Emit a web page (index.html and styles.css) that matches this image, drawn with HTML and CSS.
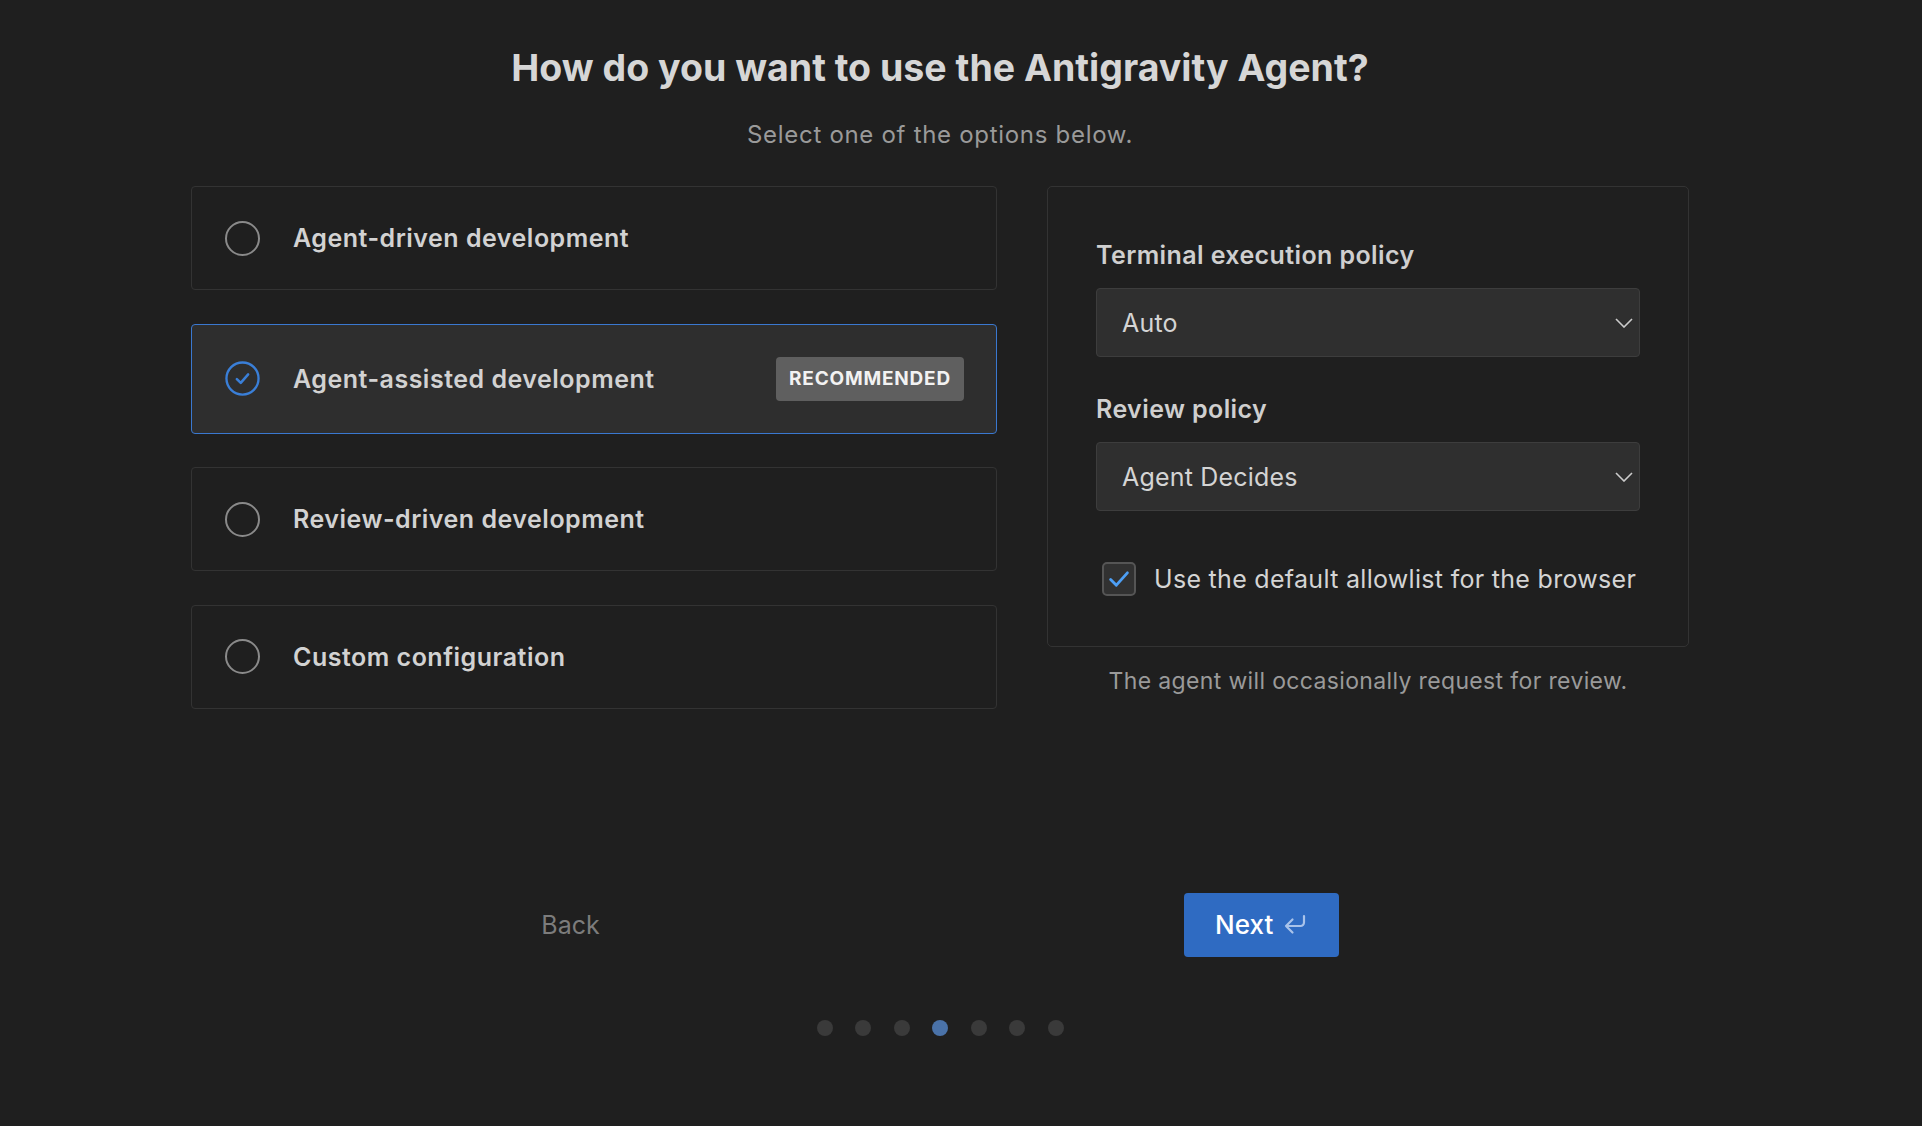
FILE: index.html
```html
<!DOCTYPE html>
<html lang="en">
<head>
<meta charset="utf-8">
<title>Antigravity Agent</title>
<link rel="stylesheet" href="styles.css">
</head>
<body>
<main class="page">
  <h1 class="title">How do you want to use the Antigravity Agent?</h1>
  <p class="subtitle">Select one of the options below.</p>
  <div class="content">
    <div class="options">
      <div class="option">
        <span class="radio"></span>
        <span class="option-label">Agent-driven development</span>
      </div>
      <div class="option selected">
        <svg class="radio-check" viewBox="0 0 36 36" width="36" height="36">
          <circle cx="18" cy="18" r="16.5" fill="none" stroke="#3a7fd8" stroke-width="2.4"/>
          <path d="M12.2 18.6 L16.2 22.5 L23.8 13.8" fill="none" stroke="#3a7fd8" stroke-width="2.6" stroke-linecap="round" stroke-linejoin="round"/>
        </svg>
        <span class="option-label">Agent-assisted development</span>
        <span class="badge">RECOMMENDED</span>
      </div>
      <div class="option">
        <span class="radio"></span>
        <span class="option-label">Review-driven development</span>
      </div>
      <div class="option">
        <span class="radio"></span>
        <span class="option-label">Custom configuration</span>
      </div>
    </div>
    <div class="side">
      <div class="panel">
        <div class="field-label">Terminal execution policy</div>
        <div class="select">
          <span>Auto</span>
          <svg class="chevron" viewBox="0 0 18 10" width="18" height="10"><path d="M1 1 L9 9 L17 1" fill="none" stroke="#cccccc" stroke-width="1.6"/></svg>
        </div>
        <div class="field-label second">Review policy</div>
        <div class="select">
          <span>Agent Decides</span>
          <svg class="chevron" viewBox="0 0 18 10" width="18" height="10"><path d="M1 1 L9 9 L17 1" fill="none" stroke="#cccccc" stroke-width="1.6"/></svg>
        </div>
        <div class="check-row">
          <span class="checkbox">
            <svg viewBox="0 0 34 34" width="34" height="34"><path d="M7.5 17.5 L14 24 L26.5 10" fill="none" stroke="#4d9ff5" stroke-width="3.2" stroke-linecap="round" stroke-linejoin="round"/></svg>
          </span>
          <span class="check-label">Use the default allowlist for the browser</span>
        </div>
      </div>
      <p class="hint">The agent will occasionally request for review.</p>
    </div>
  </div>
  <div class="footer">
    <button class="back">Back</button>
    <button class="next">Next
      <svg class="enter" viewBox="0 0 24 22" width="24" height="22"><path d="M21 2 V8.5 A3.5 3.5 0 0 1 17.5 12 H3 M9.5 5.5 L3 12 L9.5 18.5" fill="none" stroke="#a9c3ea" stroke-width="2.2" stroke-linecap="round" stroke-linejoin="round"/></svg>
    </button>
  </div>
  <div class="dots">
    <span class="dot"></span><span class="dot"></span><span class="dot"></span><span class="dot active"></span><span class="dot"></span><span class="dot"></span><span class="dot"></span>
  </div>
</main>
</body>
</html>
```
FILE: styles.css
```css
html, body {
  margin: 0;
  padding: 0;
  background: #1f1f1f;
}
body {
  font-family: Inter, "Noto Sans", "Liberation Sans", sans-serif;
  color: #d4d4d4;
  height: 1126px;
  overflow: hidden;
}
.page {
  width: 1880px;
  display: flex;
  flex-direction: column;
  align-items: center;
}
.title {
  margin: 46px 0 0;
  font-size: 37.5px;
  line-height: 44px;
  font-weight: 700;
  color: #d6d6d6;
  letter-spacing: 0;
}
.subtitle {
  margin: 31px 0 0;
  font-size: 24px;
  line-height: 28px;
  letter-spacing: 0.7px;
  color: #9a9a9a;
}
.content {
  margin-top: 37px;
  display: flex;
  gap: 50px;
  align-items: flex-start;
}
.options {
  width: 806px;
  display: flex;
  flex-direction: column;
  gap: 33.5px;
}
.option {
  box-sizing: border-box;
  min-height: 104px;
  padding: 32px 32px 32px 33px;
  border: 1px solid #333333;
  border-radius: 4px;
  display: flex;
  align-items: center;
  gap: 33px;
}
.option.selected {
  background: #2e2e2e;
  border-color: #3a78d0;
}
.radio {
  box-sizing: border-box;
  width: 35px;
  height: 35px;
  border: 2px solid #8a8a8a;
  border-radius: 50%;
  flex: none;
}
.radio-check {
  width: 35px;
  height: 35px;
  flex: none;
}
.option-label {
  font-size: 25px;
  letter-spacing: 0.5px;
  font-weight: 600;
  color: #d2d2d2;
  flex: 1;
}
.badge {
  background: #5f5f5f;
  color: #f2f2f2;
  font-size: 19px;
  font-weight: 700;
  letter-spacing: 0.8px;
  height: 44px;
  line-height: 44px;
  padding: 0 13px;
  border-radius: 4px;
}
.side {
  width: 642px;
  display: flex;
  flex-direction: column;
}
.panel {
  box-sizing: border-box;
  border: 1px solid #333333;
  border-radius: 5px;
  padding: 53px 48px 50px 48px;
}
.field-label {
  font-size: 25px;
  line-height: 30px;
  letter-spacing: 0.4px;
  font-weight: 600;
  color: #cfcfcf;
}
.field-label.second {
  margin-top: 37px;
}
.select {
  margin-top: 18px;
  box-sizing: border-box;
  height: 69px;
  background: #2f2f2f;
  border: 1px solid #3d3d3d;
  border-radius: 4px;
  padding: 0 6px 0 25px;
  display: flex;
  align-items: center;
  justify-content: space-between;
  font-size: 25px;
  letter-spacing: 0.2px;
  color: #d4d4d4;
}
.chevron {
  flex: none;
}
.check-row {
  margin-top: 51px;
  display: flex;
  align-items: center;
  gap: 18px;
  padding-left: 6px;
}
.checkbox {
  box-sizing: border-box;
  width: 34px;
  height: 34px;
  background: #313131;
  border: 2px solid #555555;
  border-radius: 5px;
  display: flex;
  align-items: center;
  justify-content: center;
  flex: none;
}
.checkbox svg {
  width: 30px;
  height: 30px;
}
.check-label {
  font-size: 25px;
  letter-spacing: 0.3px;
  color: #d4d4d4;
}
.hint {
  margin: 20px 0 0;
  text-align: center;
  font-size: 23px;
  line-height: 28px;
  letter-spacing: 0.35px;
  color: #9a9a9a;
}
.footer {
  margin-top: 184px;
  display: flex;
  align-items: center;
  gap: 584px;
}
.back {
  background: none;
  border: none;
  padding: 0;
  font-family: inherit;
  font-size: 25px;
  color: #7c7c7c;
}
.next {
  box-sizing: border-box;
  height: 64px;
  width: 155px;
  background: #2f6bc2;
  border: none;
  border-radius: 4px;
  font-family: inherit;
  font-size: 26px;
  font-weight: 500;
  color: #ffffff;
  display: flex;
  align-items: center;
  justify-content: center;
  gap: 10px;
}
.enter {
  flex: none;
}
.dots {
  margin-top: 63px;
  display: flex;
  gap: 22.5px;
}
.dot {
  width: 16px;
  height: 16px;
  border-radius: 50%;
  background: #3a3a3a;
}
.dot.active {
  background: #4a72a8;
}
```
